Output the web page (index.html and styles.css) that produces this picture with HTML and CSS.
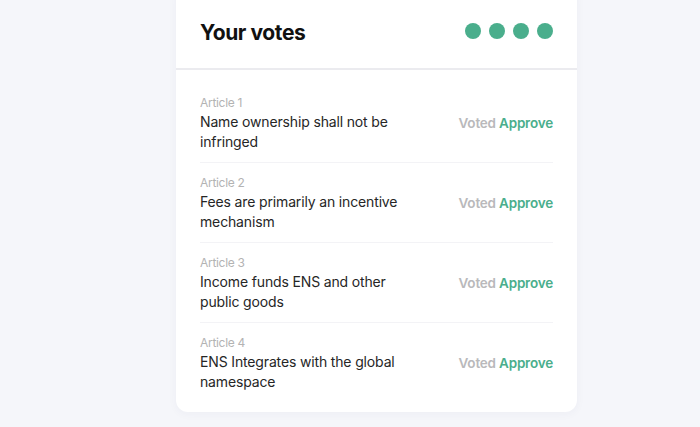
FILE: index.html
```html
<!DOCTYPE html>
<html>
<head>
<meta charset="utf-8">
<link rel="stylesheet" href="styles.css">
</head>
<body>
<div class="page">
  <section class="card">
    <header class="card-head">
      <h2 class="title">Your votes</h2>
      <div class="dots"><span class="dot"></span><span class="dot"></span><span class="dot"></span><span class="dot"></span></div>
    </header>
    <ul class="votes">
      <li class="vote">
        <div class="info"><div class="label">Article 1</div><div class="name">Name ownership shall not be infringed</div></div>
        <div class="result"><span class="voted">Voted</span> <span class="approve">Approve</span></div>
      </li>
      <li class="vote">
        <div class="info"><div class="label">Article 2</div><div class="name">Fees are primarily an incentive mechanism</div></div>
        <div class="result"><span class="voted">Voted</span> <span class="approve">Approve</span></div>
      </li>
      <li class="vote">
        <div class="info"><div class="label">Article 3</div><div class="name">Income funds ENS and other public goods</div></div>
        <div class="result"><span class="voted">Voted</span> <span class="approve">Approve</span></div>
      </li>
      <li class="vote">
        <div class="info"><div class="label">Article 4</div><div class="name">ENS Integrates with the global namespace</div></div>
        <div class="result"><span class="voted">Voted</span> <span class="approve">Approve</span></div>
      </li>
    </ul>
  </section>
</div>
</body>
</html>
```

FILE: styles.css
```css
* { box-sizing: border-box; }
html, body { margin: 0; padding: 0; }
body {
  background: #f5f6fa;
  font-family: Inter, "Liberation Sans", sans-serif;
  width: 700px;
  height: 427px;
  overflow: hidden;
}
.page {
  display: flex;
  padding-left: 176px;
}
.card {
  width: 401px;
  margin-top: -16px;
  background: #ffffff;
  border-radius: 12px;
  box-shadow: 0 2px 10px rgba(40, 50, 90, 0.04);
  padding-bottom: 10px;
}
.card-head {
  height: 86px;
  padding: 12px 24px 0 24px;
  display: flex;
  align-items: center;
  justify-content: space-between;
  border-bottom: 2px solid #ebebef;
}
.title {
  margin: 0;
  font-size: 21px;
  font-weight: 700;
  letter-spacing: -0.4px;
  color: #111111;
}
.dots {
  display: flex;
  gap: 8px;
  margin-top: -2px;
}
.dot {
  width: 16px;
  height: 16px;
  border-radius: 50%;
  background: #4aae8c;
}
.votes {
  list-style: none;
  margin: 13px 24px 0 24px;
  padding: 0;
}
.vote {
  display: flex;
  justify-content: space-between;
  align-items: flex-start;
  padding: 11px 0 10px 0;
  border-bottom: 1px solid #f3f3f6;
}
.vote:last-child { border-bottom: none; }
.info { width: 210px; }
.label {
  font-size: 12px;
  line-height: 18px;
  color: #b3b3b3;
  letter-spacing: -0.3px;
}
.name {
  font-size: 14px;
  line-height: 20px;
  color: #262626;
  letter-spacing: -0.15px;
}
.result {
  margin-top: 19px;
  font-size: 13.5px;
  line-height: 20px;
  font-weight: 600;
  letter-spacing: -0.2px;
}
.voted { color: #b9b9bb; }
.approve { color: #4aae8c; }
```
